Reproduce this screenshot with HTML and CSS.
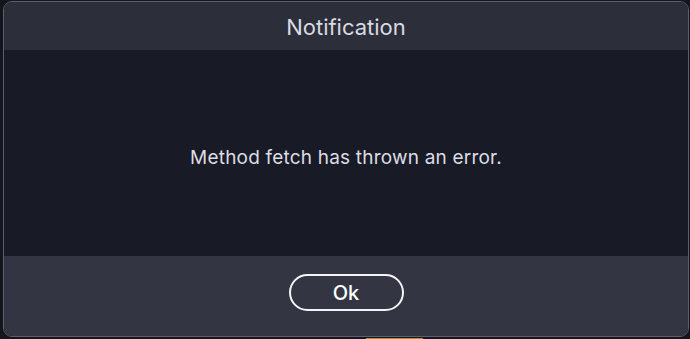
FILE: index.html
```html
<!DOCTYPE html>
<html>
<head>
<meta charset="utf-8">
<link rel="stylesheet" href="styles.css">
</head>
<body>
<div class="page">
  <div class="dialog">
    <div class="dialog-header">Notification</div>
    <div class="dialog-body">Method fetch has thrown an error.</div>
    <div class="dialog-footer">
      <button class="btn-ok">Ok</button>
    </div>
  </div>
  <div class="accent-row"><div class="accent"></div></div>
</div>
</body>
</html>
```

FILE: styles.css
```css
html, body {
  margin: 0;
  padding: 0;
  background: #14151d;
  width: 690px;
  height: 339px;
  overflow: hidden;
}
.page {
  padding: 1px 1px 0 3px;
  font-family: Inter, "Noto Sans", sans-serif;
}
.dialog {
  width: 684px;
  height: 334px;
  border: 1px solid #5c5f6d;
  border-radius: 9px;
  overflow: hidden;
  display: flex;
  flex-direction: column;
}
.dialog-header {
  height: 48px;
  background: #2c2e3a;
  color: #d9dae2;
  font-size: 22px;
  display: flex;
  align-items: center;
  justify-content: center;
  padding-top: 1px;
  box-sizing: border-box;
}
.dialog-body {
  height: 206px;
  background: #181a26;
  color: #dcdde4;
  font-size: 19px;
  letter-spacing: 0.2px;
  display: flex;
  align-items: center;
  justify-content: center;
  padding-top: 8px;
  box-sizing: border-box;
}
.dialog-footer {
  flex: 1;
  background: #333542;
  display: flex;
  align-items: flex-start;
  justify-content: center;
  padding-top: 18px;
}
.btn-ok {
  width: 115px;
  height: 37px;
  border: 2px solid #f4f4f6;
  border-radius: 19px;
  background: transparent;
  color: #ffffff;
  font-family: Inter, "Noto Sans", sans-serif;
  font-size: 20px;
  font-weight: 500;
  padding: 0;
}
.accent-row {
  display: flex;
  padding-top: 1px;
}
.accent {
  width: 57px;
  height: 3px;
  background: #c68a2b;
  margin-left: 363px;
}
```
